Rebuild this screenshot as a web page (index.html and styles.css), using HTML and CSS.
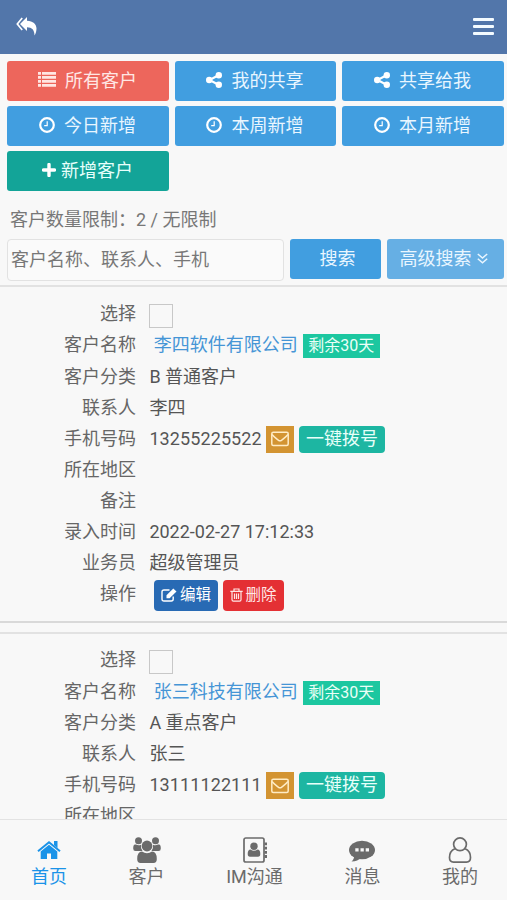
FILE: index.html
```
<!DOCTYPE html>
<html lang="zh-CN">
<head>
<meta charset="utf-8">
<title>客户</title>
<link rel="stylesheet" href="styles.css">
</head>
<body>
<svg class="defs" aria-hidden="true">
  <symbol id="share" viewBox="0 0 16 16"><path d="M13 3L3.500 8L13 13" fill="none" stroke="currentColor" stroke-width="2.100"/><circle cx="3.200" cy="8" r="3.200"/><circle cx="12.800" cy="3.200" r="3.200"/><circle cx="12.800" cy="12.800" r="3.200"/></symbol>
  <symbol id="clock" viewBox="0 0 16 16"><circle cx="8" cy="8" r="6.800" fill="none" stroke="currentColor" stroke-width="2.200"/><path d="M8.200 4.200V8.700H5.200" fill="none" stroke="currentColor" stroke-width="1.200"/></symbol>
  <symbol id="mail" viewBox="0 0 18 16"><rect x=".8" y="1.2" width="16.4" height="13.4" rx="1.5" fill="none" stroke="currentColor" stroke-width="1.5"/><path d="M1 3.500C3 6 5.500 7.700 7.500 9.300Q9 10.300 10.500 9.300C12.500 7.700 15 6 17 3.500" fill="none" stroke="currentColor" stroke-width="1.5"/></symbol>
</svg>
<div class="app">
  <header class="topbar">
    <svg class="reply" viewBox="0 0 21 19"><path d="M6.200 1L1.300 7L6.200 13" fill="none" stroke="currentColor" stroke-width="1.700"/><path d="M11 0V3.700C17 4 20.500 7 20.500 11.500C20.500 14 19.800 16.500 18.500 18.500C18.500 13 16 10.200 11 10.200V14L4 7Z"/></svg>
    <div class="burger"><i></i><i></i><i></i></div>
  </header>
  <main class="content">
    <div class="filters">
      <a class="btn red"><svg class="list" viewBox="0 0 18 15"><path d="M0 0h3v2.700H0zM4 0h14v2.700H4zM0 4h3v2.700H0zM4 4h14v2.700H4zM0 8h3v2.700H0zM4 8h14v2.700H4zM0 12h3v2.700H0zM4 12h14v2.700H4z"/></svg>所有客户</a>
      <a class="btn"><svg class="ico"><use href="#share"/></svg>我的共享</a>
      <a class="btn"><svg class="ico"><use href="#share"/></svg>共享给我</a>
      <a class="btn"><svg class="ico"><use href="#clock"/></svg>今日新增</a>
      <a class="btn"><svg class="ico"><use href="#clock"/></svg>本周新增</a>
      <a class="btn"><svg class="ico"><use href="#clock"/></svg>本月新增</a>
      <a class="btn green"><svg class="plus" viewBox="0 0 14 14"><path d="M7 1.500V12.500M1.500 7H12.500" fill="none" stroke="currentColor" stroke-width="3.400" stroke-linecap="round"/></svg>新增客户</a>
    </div>
    <p class="limit">客户数量限制：2 / 无限制</p>
    <div class="search">
      <input class="field" type="text" placeholder="客户名称、联系人、手机">
      <a class="btn go">搜索</a>
      <a class="btn more">高级搜索<svg class="down" viewBox="0 0 11 11"><path d="M.8 1L5.500 5L10.200 1M.8 5.800L5.500 9.800L10.200 5.800" fill="none" stroke="currentColor" stroke-width="1.500"/></svg></a>
    </div>
    <section class="card">
      <div class="row"><label>选择</label><span class="check"></span></div>
      <div class="row title"><label>客户名称</label><a class="name">李四软件有限公司</a><span class="left">剩余30天</span></div>
      <div class="row"><label>客户分类</label><span>B 普通客户</span></div>
      <div class="row"><label>联系人</label><span>李四</span></div>
      <div class="row"><label>手机号码</label><span class="num">13255225522</span><a class="mail"><svg><use href="#mail"/></svg></a><a class="dial">一键拨号</a></div>
      <div class="row"><label>所在地区</label></div>
      <div class="row"><label>备注</label></div>
      <div class="row"><label>录入时间</label><span>2022-02-27 17:12:33</span></div>
      <div class="row"><label>业务员</label><span>超级管理员</span></div>
      <div class="row"><label>操作</label>
        <a class="act edit"><svg viewBox="0 0 16 14"><path d="M12.200 8.500V11Q12.200 13 10.200 13H3Q1 13 1 11V4Q1 2 3 2H8.500" fill="none" stroke="currentColor" stroke-width="1.400"/><path d="M5.500 7.200L12.300.5L15.500 3.500L8.600 10.200H5.500Z"/></svg>编辑</a>
        <a class="act del"><svg viewBox="0 0 13 14"><path d="M.3 3.300H12.700M4 3V1H9V3M2 3.500V11.800Q2 13.200 3.400 13.200H9.600Q11 13.200 11 11.800V3.500M4.500 5.500V11M6.500 5.500V11M8.500 5.500V11" fill="none" stroke="currentColor" stroke-width="1.200"/></svg>删除</a>
      </div>
    </section>
    <section class="card">
      <div class="row"><label>选择</label><span class="check"></span></div>
      <div class="row title"><label>客户名称</label><a class="name">张三科技有限公司</a><span class="left">剩余30天</span></div>
      <div class="row"><label>客户分类</label><span>A 重点客户</span></div>
      <div class="row"><label>联系人</label><span>张三</span></div>
      <div class="row"><label>手机号码</label><span class="num">13111122111</span><a class="mail"><svg><use href="#mail"/></svg></a><a class="dial">一键拨号</a></div>
      <div class="row"><label>所在地区</label></div>
    </section>
  </main>
  <nav class="tabs">
    <a class="tab on"><svg width="24" height="26" viewBox="0 0 24 26"><path d="M1 14.300L12 5.200L23 14.300" fill="none" stroke="currentColor" stroke-width="2"/><path d="M17 4h3.500v7L17 8zM12 7.800L20.300 14.500V22H14V16.500H10V22H3.700V14.500Z"/></svg>首页</a>
    <a class="tab"><svg width="28" height="26" viewBox="0 0 28 26"><circle cx="5.500" cy="3.700" r="3.500"/><circle cx="22.500" cy="3.700" r="3.500"/><path d="M3 7.500Q5.500 9 8 7.800Q7.400 11.500 9.500 14H2.500Q.2 14 .2 11.500Q.2 7.500 2 7.500ZM25 7.500Q22.500 9 20 7.800Q20.600 11.500 18.500 14H25.500Q27.800 14 27.800 11.500Q27.800 7.500 26 7.500Z"/><circle cx="14" cy="9" r="5.400"/><path d="M9 14.500Q14 18 19 14.500Q23.800 14.500 23.800 22Q23.800 26 20.500 26H7.500Q4.200 26 4.200 22Q4.200 14.500 9 14.500Z"/></svg>客户</a>
    <a class="tab"><svg width="26" height="26" viewBox="0 0 26 26"><rect x="2" y="1" width="20" height="24" rx="1.800" fill="none" stroke="currentColor" stroke-width="1.700"/><path d="M22.500 5.500h2.500v2.800h-2.500zM22.500 9.700h2.500v2.800h-2.500zM22.500 13.900h2.500v2.800h-2.500zM22.500 18.100h2.500v2.800h-2.500z"/><circle cx="12" cy="9.300" r="3.700"/><path d="M8.500 12.500Q12 15 15.500 12.500Q18.300 12.500 18.300 17Q18.300 19.800 16 19.800H8Q5.700 19.800 5.700 17Q5.700 12.500 8.500 12.500Z"/></svg>IM沟通</a>
    <a class="tab"><svg width="26" height="26" viewBox="0 0 26 26"><ellipse cx="13" cy="13" rx="13" ry="9.300"/><path d="M5 18Q5.500 22 2.500 24.500Q9 24.500 12 20.500Z"/><path class="dots" d="M6.300 11.200h3.300v3.300H6.300zM11.500 11.200h3.300v3.300h-3.300zM16.700 11.200H20v3.300h-3.300z"/></svg>消息</a>
    <a class="tab"><svg width="24" height="26" viewBox="0 0 24 26"><g fill="none" stroke="currentColor" stroke-width="1.700"><circle cx="12" cy="7.300" r="6.400"/><path d="M6.800 11.700Q1.500 14 1.500 20.500Q1.500 25.100 5.500 25.100H18.500Q22.500 25.100 22.500 20.500Q22.500 14 17.200 11.700"/></g></svg>我的</a>
  </nav>
</div>
</body>
</html>
```
FILE: styles.css
```
* { box-sizing: border-box; }
body {
  margin: 0;
  font: 18px/24px Roboto, "Noto Sans CJK SC", sans-serif;
  color: #555;
  background: #f8f8f8;
}
.defs { position: absolute; width: 0; height: 0; }
svg { fill: currentColor; flex: none; }
.app { height: 900px; display: flex; flex-direction: column; overflow: hidden; }
.topbar {
  flex: none;
  height: 54px;
  padding: 0 13px 2px 16px;
  display: flex;
  align-items: center;
  justify-content: space-between;
  background: #5276aa;
  color: #fff;
}
.reply { width: 21px; height: 19px; }
.burger { display: grid; gap: 3.5px; padding-top: 1px; }
.burger i { width: 21px; height: 3.5px; background: #f4fbff; border-radius: 1px; }
.content { flex: 1; min-height: 0; overflow: hidden; }
.filters {
  display: grid;
  grid-template-columns: repeat(3, 1fr);
  grid-auto-rows: 39.5px;
  gap: 5.5px 6.2px;
  padding: 7px 3.4px 0 7.3px;
}
.btn {
  display: flex;
  align-items: center;
  justify-content: center;
  background: #419ee0;
  color: #e9f6ff;
  border-radius: 3px;
}
.filters .btn { padding-right: 1px; }
.red { background: #ed665c; color: #ffe7e4; }
.green { background: #13a498; color: #e8fffb; }
.ico { width: 16px; height: 16px; margin: 0 9px 1px 0; color: #fff; }
.list { width: 18px; height: 15px; margin: 0 9px 2px 0; }
.plus { width: 14px; height: 14px; margin: 0 5px 2px 0; color: #fff; }
.limit { margin: 17px 0 7px 10px; color: #777; }
.search { display: flex; gap: 6px; padding: 0 3px 0 7px; height: 46.5px; }
.field {
  width: 277px;
  height: 42px;
  padding: 0 3px 1px;
  border: 1px solid #e2e2e2;
  border-radius: 4px;
  background: #fafafa;
  font: inherit;
}
.field::placeholder { color: #777; opacity: 1; }
.go { width: 91px; height: 40px; padding-left: 4px; }
.more { width: 117px; height: 40px; padding-right: 4px; background: #66afe4; }
.down { width: 11px; height: 11px; margin: 0 0 1px 5px; }
.card {
  margin-bottom: 8.6px;
  padding: 11.4px 0 11.2px;
  border-top: 2px solid #e2e2e2;
  border-bottom: 2px solid #d9d9d9;
}
.row { height: 31.1px; display: flex; align-items: center; white-space: nowrap; }
.title { margin-bottom: .4px; }
.row label { width: 136px; margin-right: 13.4px; text-align: right; color: #666; }
.check { width: 24px; height: 24px; margin-top: 4px; border: 1.5px solid #c8c8c8; }
.name { margin-left: 4.3px; color: #4595d6; }
.left {
  margin: 2px 0 0 5px;
  width: 77px;
  height: 24px;
  text-align: center;
  font-size: 16px;
  line-height: 23px;
  color: #eafff7;
  background: #1cc7a0;
}
.num { width: 113px; letter-spacing: .1px; }
.mail {
  width: 28px;
  height: 27px;
  margin: 1px 5px 0 3.6px;
  display: grid;
  place-items: center;
  background: #d39432;
  color: #ffecc5;
}
.mail svg { width: 18px; height: 16px; }
.dial {
  width: 86px;
  height: 27px;
  margin-top: 1px;
  text-align: center;
  line-height: 26px;
  border-radius: 4px;
  color: #e8fff9;
  background: #1db6a2;
}
.act {
  height: 31px;
  margin-top: 3px;
  display: flex;
  align-items: center;
  justify-content: center;
  font-size: 15.5px;
  padding-bottom: 2px;
  border-radius: 4px;
  color: #fff;
}
.edit { width: 64px; margin-left: 4.6px; background: #286ab4; }
.edit svg { width: 16px; height: 14px; margin-right: 3px; }
.del { width: 61px; margin-left: 5px; background: #e43034; color: #ffe6e6; }
.del svg { width: 13px; height: 14px; margin-right: 2px; }
.tabs {
  flex: none;
  height: 81px;
  padding: 17px 29px 0 31px;
  display: flex;
  justify-content: space-between;
  border-top: 1px solid #e3e3e3;
  color: #6b6b6b;
}
.tab { display: flex; flex-direction: column; align-items: center; gap: 2px; }
.on { color: #1a93e8; }
.dots { fill: #f8f8f8; }
```
